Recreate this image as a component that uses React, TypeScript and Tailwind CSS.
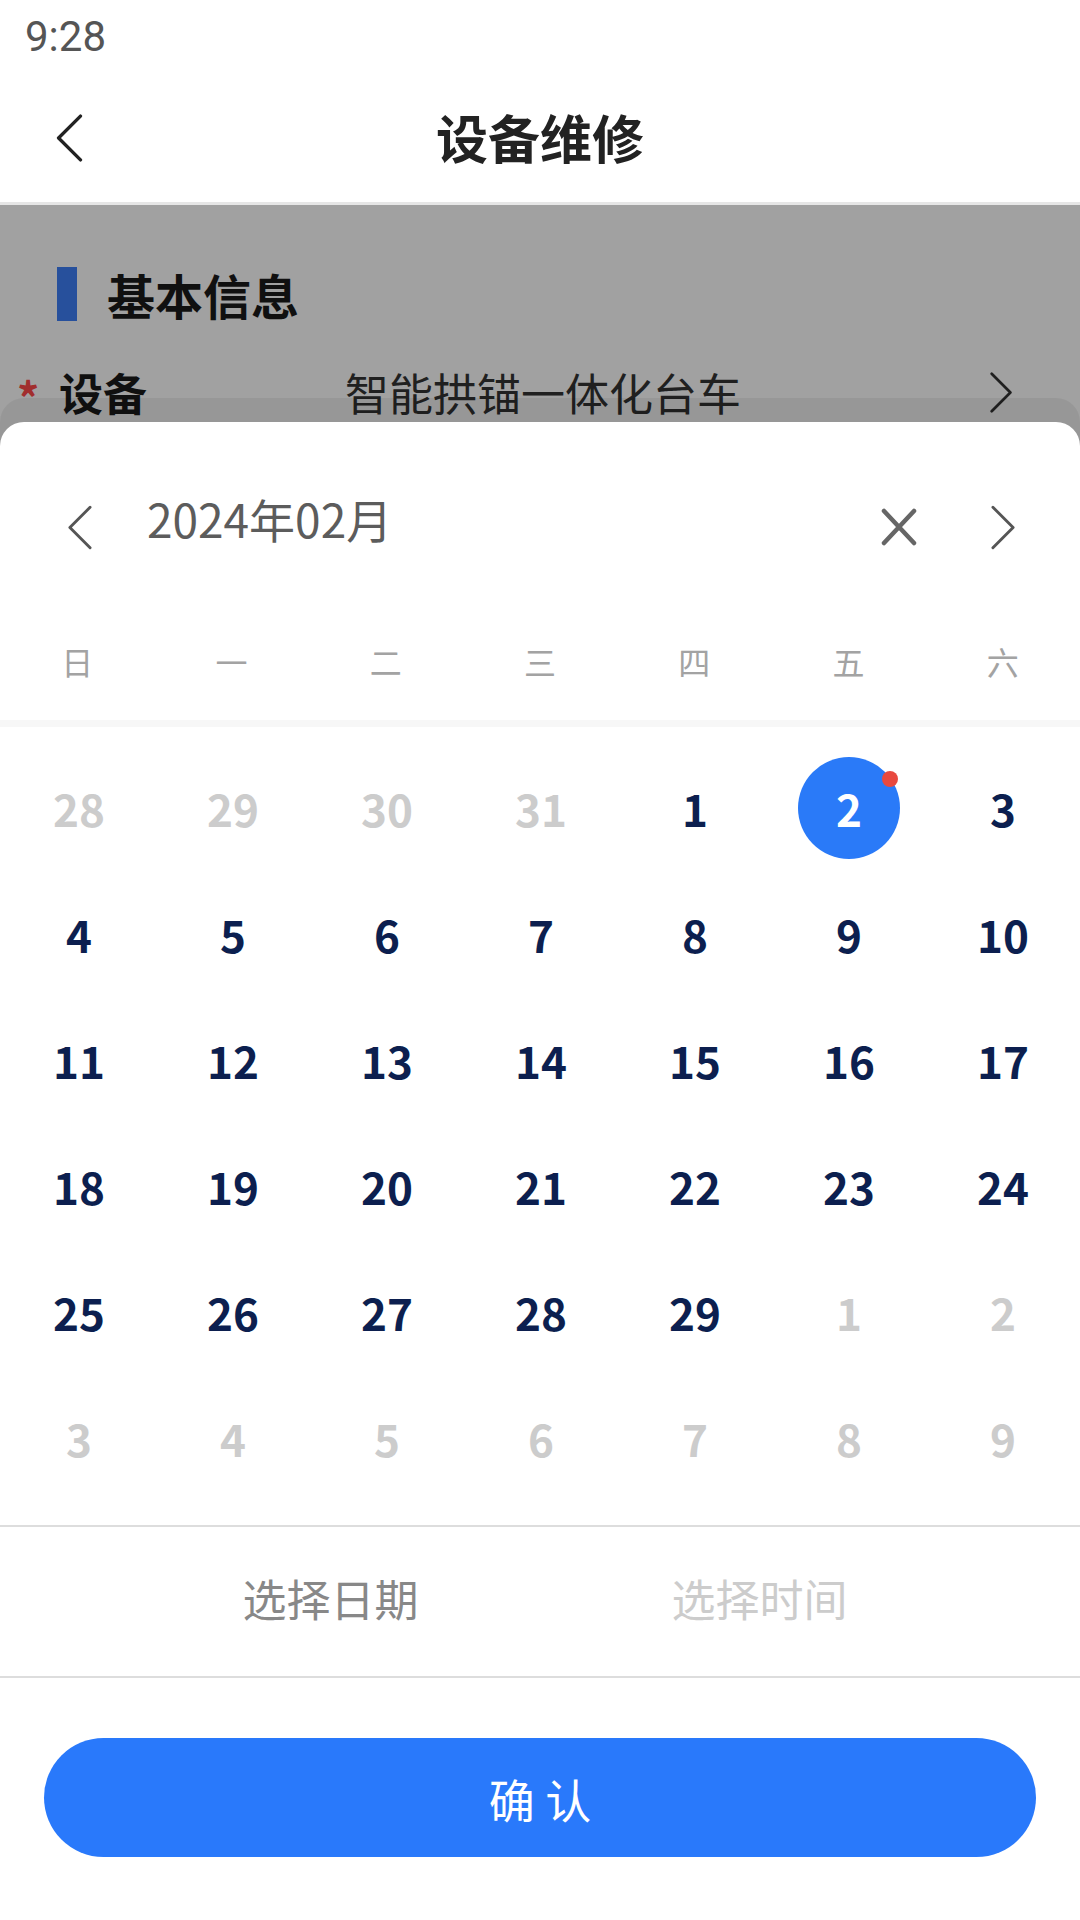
import React from 'react';

const WEEK = ['日', '一', '二', '三', '四', '五', '六'];

type Day = { n: number; cur: boolean };

function buildDays(): Day[] {
  const days: Day[] = [];
  [28, 29, 30, 31].forEach((n) => days.push({ n, cur: false }));
  for (let n = 1; n <= 29; n++) days.push({ n, cur: true });
  let n = 1;
  while (days.length < 42) days.push({ n: n++, cur: false });
  return days;
}

function Chevron({ dir, className, stroke = '#555', sw = 3 }: { dir: 'left' | 'right'; className: string; stroke?: string; sw?: number }) {
  const d = dir === 'left' ? 'M24 2 L3 23 L24 44' : 'M2 2 L23 23 L2 44';
  return (
    <svg viewBox="0 0 26 46" className={className} fill="none">
      <path d={d} stroke={stroke} strokeWidth={sw} strokeLinecap="round" strokeLinejoin="round" />
    </svg>
  );
}

export default function App() {
  const days = buildDays();

  return (
    <div className="relative w-[1080px] h-[1920px] overflow-hidden bg-white font-['Noto_Sans_CJK_SC',sans-serif]">
      {/* Status bar */}
      <div className="h-[72px] px-[25px] flex items-center text-[42px] text-[#555] font-['Roboto',sans-serif]">
        9:28
      </div>

      {/* Nav bar */}
      <div className="relative h-[133px] flex items-center justify-center border-b-[3px] border-[#e6e6e6]">
        <Chevron dir="left" className="absolute left-[55px] top-[42px] w-[28px] h-[48px]" stroke="#222" sw={3.2} />
        <span className="text-[52px] font-bold text-[#222] leading-none">设备维修</span>
      </div>

      {/* Form behind the overlay */}
      <div className="pt-[61px]">
        <div className="flex items-center h-[56px] pl-[57px]">
          <div className="w-[20px] h-[54px] bg-[#3f7ff8]" />
          <span className="ml-[30px] text-[48px] font-bold text-[#1a1a1a] leading-none">基本信息</span>
        </div>
        <div className="flex items-center h-[80px] mt-[30px] pl-[17px] pr-[66px]">
          <span className="w-[42px] text-[44px] font-bold text-[#ff4a4a] leading-none pt-[8px]">*</span>
          <span className="w-[286px] text-[44px] font-bold text-[#1a1a1a] leading-none">设备</span>
          <span className="flex-1 text-[44px] text-[#333] leading-none">智能拱锚一体化台车</span>
          <Chevron dir="right" className="w-[25px] h-[41px]" stroke="#333" sw={3} />
        </div>
      </div>

      {/* Dim overlay */}
      <div className="absolute left-0 right-0 top-[205px] bottom-0 bg-black/[0.37]" />

      {/* Bottom sheet */}
      <div className="absolute left-0 right-0 top-[422px] bottom-0 bg-white rounded-t-[24px] shadow-[0_-24px_0_rgba(0,0,0,0.06)] flex flex-col">
        {/* Month header */}
        <div className="h-[210px] flex items-center pl-[67px] pr-[64px]">
          <Chevron dir="left" className="w-[25px] h-[45px]" />
          <span className="ml-[55px] text-[46px] text-[#5c5c5c] leading-none -mt-[18px]">2024年02月</span>
          <div className="flex-1" />
          <svg viewBox="0 0 36 38" className="w-[36px] h-[38px]" fill="none">
            <path d="M3 3 L33 35 M33 3 L3 35" stroke="#666" strokeWidth="4.5" strokeLinecap="round" />
          </svg>
          <Chevron dir="right" className="ml-[74px] w-[25px] h-[45px]" />
        </div>

        {/* Weekdays */}
        <div className="grid grid-cols-7 h-[60px] items-center">
          {WEEK.map((w) => (
            <span key={w} className="text-center text-[32px] text-[#a3a3a3] leading-none -mt-[2px]">{w}</span>
          ))}
        </div>
        <div className="h-[28px]" />
        <div className="h-[7px] bg-[#f7f7f7]" />

        {/* Days */}
        <div className="grid grid-cols-7 pt-[18px] pb-[24px] pl-[2px]">
          {days.map((d, i) => {
            const selected = d.cur && d.n === 2;
            return (
              <div key={i} className="h-[126px] flex items-center justify-center">
                {selected ? (
                  <div className="relative w-[102px] h-[102px] rounded-full bg-[#2a7af8] flex items-center justify-center">
                    <span className="text-[44px] font-bold text-white leading-none">{d.n}</span>
                    <span className="absolute right-[2px] top-[14px] w-[16px] h-[16px] rounded-full bg-[#e8493f]" />
                  </div>
                ) : (
                  <span className={`text-[44px] font-bold leading-none ${d.cur ? 'text-[#0c1f4f]' : 'text-[#cccccc]'}`}>{d.n}</span>
                )}
              </div>
            );
          })}
        </div>

        {/* Tabs */}
        <div className="h-[153px] flex items-center pl-[116px] pr-[106px] border-t-[2px] border-b-[2px] border-[#dddddd]">
          <span className="flex-1 text-center text-[44px] text-[#888] leading-none -mt-[8px]">选择日期</span>
          <span className="flex-1 text-center text-[44px] text-[#cccccc] leading-none -mt-[8px]">选择时间</span>
        </div>

        {/* Confirm */}
        <div className="px-[44px] pt-[60px]">
          <button className="w-full h-[119px] rounded-full bg-[#2979fb] text-white text-[46px] leading-none">
            确 认
          </button>
        </div>
      </div>
    </div>
  );
}
